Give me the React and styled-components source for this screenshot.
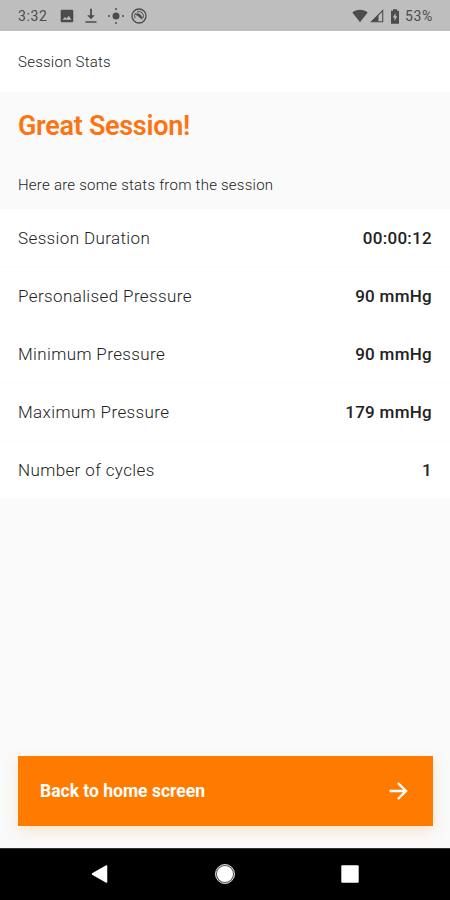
import styled, { createGlobalStyle } from "styled-components";

const stats = [
  { label: "Session Duration", value: "00:00:12" },
  { label: "Personalised Pressure", value: "90 mmHg" },
  { label: "Minimum Pressure", value: "90 mmHg" },
  { label: "Maximum Pressure", value: "179 mmHg" },
  { label: "Number of cycles", value: "1" },
];

const GlobalStyle = createGlobalStyle`
  * {
    box-sizing: border-box;
  }

  body {
    margin: 0;
    font-family: Roboto, "Liberation Sans", sans-serif;
    background: #fafafa;
  }
`;

const Screen = styled.div`
  display: flex;
  flex-direction: column;
  width: 450px;
  height: 900px;
  overflow: hidden;
  background: #fafafa;
`;

const StatusBar = styled.div`
  display: flex;
  align-items: center;
  justify-content: space-between;
  height: 31px;
  flex-shrink: 0;
  padding: 1px 17px 0 18px;
  background: #bebebe;
  color: #4c4c4c;
`;

const StatusGroup = styled.div`
  display: flex;
  align-items: center;
  gap: ${({ $gap }) => $gap}px;

  svg {
    display: block;
  }
`;

const StatusIcons = styled.div`
  display: flex;
  align-items: center;
  gap: 2px;

  svg:last-child {
    margin-left: 4px;
  }
`;

const StatusText = styled.span`
  font-size: 14px;
  line-height: 18px;
  letter-spacing: ${({ $spacing }) => $spacing || 0}px;
`;

const Clock = styled(StatusText)`
  margin-right: 4px;
`;

const Header = styled.header`
  display: flex;
  align-items: center;
  height: 61px;
  flex-shrink: 0;
  padding: 1px 18px 0;
  background: #fff;
  color: #222;
  font-size: 15px;
  font-weight: 300;
  letter-spacing: 0.25px;
`;

const Title = styled.h1`
  margin: 18px 18px 0;
  font-size: 27px;
  font-weight: 600;
  line-height: 32px;
  letter-spacing: -0.3px;
  color: #fd7311;
`;

const Intro = styled.p`
  margin: 33px 18px 0;
  height: 34px;
  font-size: 15px;
  font-weight: 300;
  line-height: 20px;
  letter-spacing: 0.24px;
  color: #222;
`;

const StatsList = styled.ul`
  margin: 0;
  padding: 0;
  list-style: none;
`;

const StatRow = styled.li`
  display: flex;
  align-items: center;
  justify-content: space-between;
  height: 58px;
  padding: 1px 18px 0;
  background: #fff;
  border-bottom: 1px solid #fcfcfc;
`;

const StatLabel = styled.span`
  font-size: 17px;
  font-weight: 300;
  letter-spacing: 0.38px;
  color: #222;
`;

const StatValue = styled.span`
  font-size: 17px;
  font-weight: 500;
  letter-spacing: 0.28px;
  color: #222;
`;

const HomeButton = styled.button`
  display: flex;
  align-items: center;
  justify-content: space-between;
  height: 70px;
  margin: auto 17px 22px 18px;
  padding: 0 23px 0 22px;
  flex-shrink: 0;
  border: none;
  background: #ff7b00;
  box-shadow: 0 5px 14px rgba(255, 123, 0, 0.18);
  color: #fff;
  font-family: inherit;
  font-size: 17.5px;
  font-weight: 700;
  cursor: pointer;
`;

const NavBar = styled.nav`
  display: flex;
  align-items: center;
  justify-content: space-between;
  height: 52px;
  flex-shrink: 0;
  padding: 0 90px;
  background: #000;
  border-top: 1px solid #333;

  svg {
    margin-top: -2px;
  }
`;

const ImageIcon = () => (
  <svg width="14" height="14" viewBox="0 0 14 14">
    <path
      fill="currentColor"
      fillRule="evenodd"
      d="M2 .8h10a1.3 1.3 0 0 1 1.3 1.3v9.8a1.3 1.3 0 0 1-1.3 1.3H2A1.3 1.3 0 0 1 .7 11.9V2.1A1.3 1.3 0 0 1 2 .8ZM2.5 10.7h9L8.7 6.8l-2.2 3L5 7.9Z"
    />
  </svg>
);

const DownloadIcon = () => (
  <svg width="16" height="16" viewBox="0 0 16 16">
    <path
      fill="currentColor"
      d="M7.1.8h1.8v6.4h2.9l-3.800 4-3.800-4h2.900ZM2.500 13.200h11v1.500h-11Z"
    />
  </svg>
);

const LocationIcon = () => (
  <svg width="16" height="18" viewBox="0 0 16 18" fill="currentColor">
    <circle cx="8" cy="9" r="3.5" />
    <circle cx="8" cy="2" r="1" />
    <circle cx="8" cy="16" r="1" />
    <circle cx="1" cy="9" r="1" />
    <circle cx="15" cy="9" r="1" />
  </svg>
);

const SyncIcon = () => (
  <svg width="14" height="16" viewBox="1 0 14 16" fill="none" stroke="currentColor" overflow="visible">
    <circle cx="7" cy="8" r="7" strokeWidth="1.3" />
    <path
      d="M3.2 10.200A4.500 4.500 0 0 1 3.500 5.200M5 4a4.500 4.500 0 0 1 6 6"
      strokeWidth="1"
    />
    <path
      d="M3.500 6.200C7 5 9.700 7 10.300 11L8 9.700 6.800 8.500Z"
      fill="currentColor"
      strokeWidth=".7"
    />
  </svg>
);

const WifiIcon = () => (
  <svg width="16" height="14" viewBox="0 0 16 14">
    <path fill="currentColor" d="M.3 3.500C4.500-.1 11.500-.1 15.700 3.500L8 13.300Z" />
  </svg>
);

const SignalIcon = () => (
  <svg width="14" height="14" viewBox="0 0 14 14">
    <path
      d="M1.500 12.700 12.700 1.500V12.700Z"
      fill="none"
      stroke="currentColor"
      strokeWidth="1.1"
    />
    <path d="M1 13 8.500 5.500V13Z" fill="currentColor" />
  </svg>
);

const BatteryIcon = () => (
  <svg width="10" height="15" viewBox="0 0 10 15">
    <path fill="currentColor" d="M3 .3h4v1.500h2v13H1v-13h2Z" />
    <path d="M5.600 4 2.800 8.500h1.700V12l2.800-4.700H5.600Z" fill="#bebebe" />
  </svg>
);

const ArrowIcon = () => (
  <svg width="22" height="22" viewBox="0 0 22 22">
    <path
      d="M1.500 11h17M10 3l8 8-8 8"
      fill="none"
      stroke="#fff"
      strokeWidth="2.4"
    />
  </svg>
);

const BackIcon = () => (
  <svg width="18" height="20" viewBox="0 0 18 20">
    <path
      d="M2.500 10 16.500 2v16Z"
      fill="#fff"
      stroke="#fff"
      strokeWidth="1.5"
      strokeLinejoin="round"
    />
  </svg>
);

const CircleIcon = () => (
  <svg width="22" height="22" viewBox="0 0 22 22">
    <circle cx="12" cy="11" r="9.5" fill="#555" stroke="#ddd" strokeWidth="1" />
    <circle cx="12" cy="11" r="8" fill="#fff" />
  </svg>
);

const SquareIcon = () => (
  <svg width="20" height="20" viewBox="0 0 20 20">
    <rect x="1.3" y="1.3" width="17.4" height="17.4" rx="1" fill="#fff" />
  </svg>
);

const App = () => {
  return (
    <>
      <GlobalStyle />
      <Screen>
        <StatusBar>
          <StatusGroup $gap={9}>
            <Clock $spacing={0.6}>3:32</Clock>
            <ImageIcon />
            <DownloadIcon />
            <LocationIcon />
            <SyncIcon />
          </StatusGroup>
          <StatusGroup $gap={5}>
            <StatusIcons>
              <WifiIcon />
              <SignalIcon />
              <BatteryIcon />
            </StatusIcons>
            <StatusText $spacing={0.7}>53%</StatusText>
          </StatusGroup>
        </StatusBar>

        <Header>Session Stats</Header>
        <Title>Great Session!</Title>
        <Intro>Here are some stats from the session</Intro>

        <StatsList>
          {stats.map((stat) => (
            <StatRow key={stat.label}>
              <StatLabel>{stat.label}</StatLabel>
              <StatValue>{stat.value}</StatValue>
            </StatRow>
          ))}
        </StatsList>

        <HomeButton type="button">
          Back to home screen
          <ArrowIcon />
        </HomeButton>

        <NavBar>
          <BackIcon />
          <CircleIcon />
          <SquareIcon />
        </NavBar>
      </Screen>
    </>
  );
};

export default App;
